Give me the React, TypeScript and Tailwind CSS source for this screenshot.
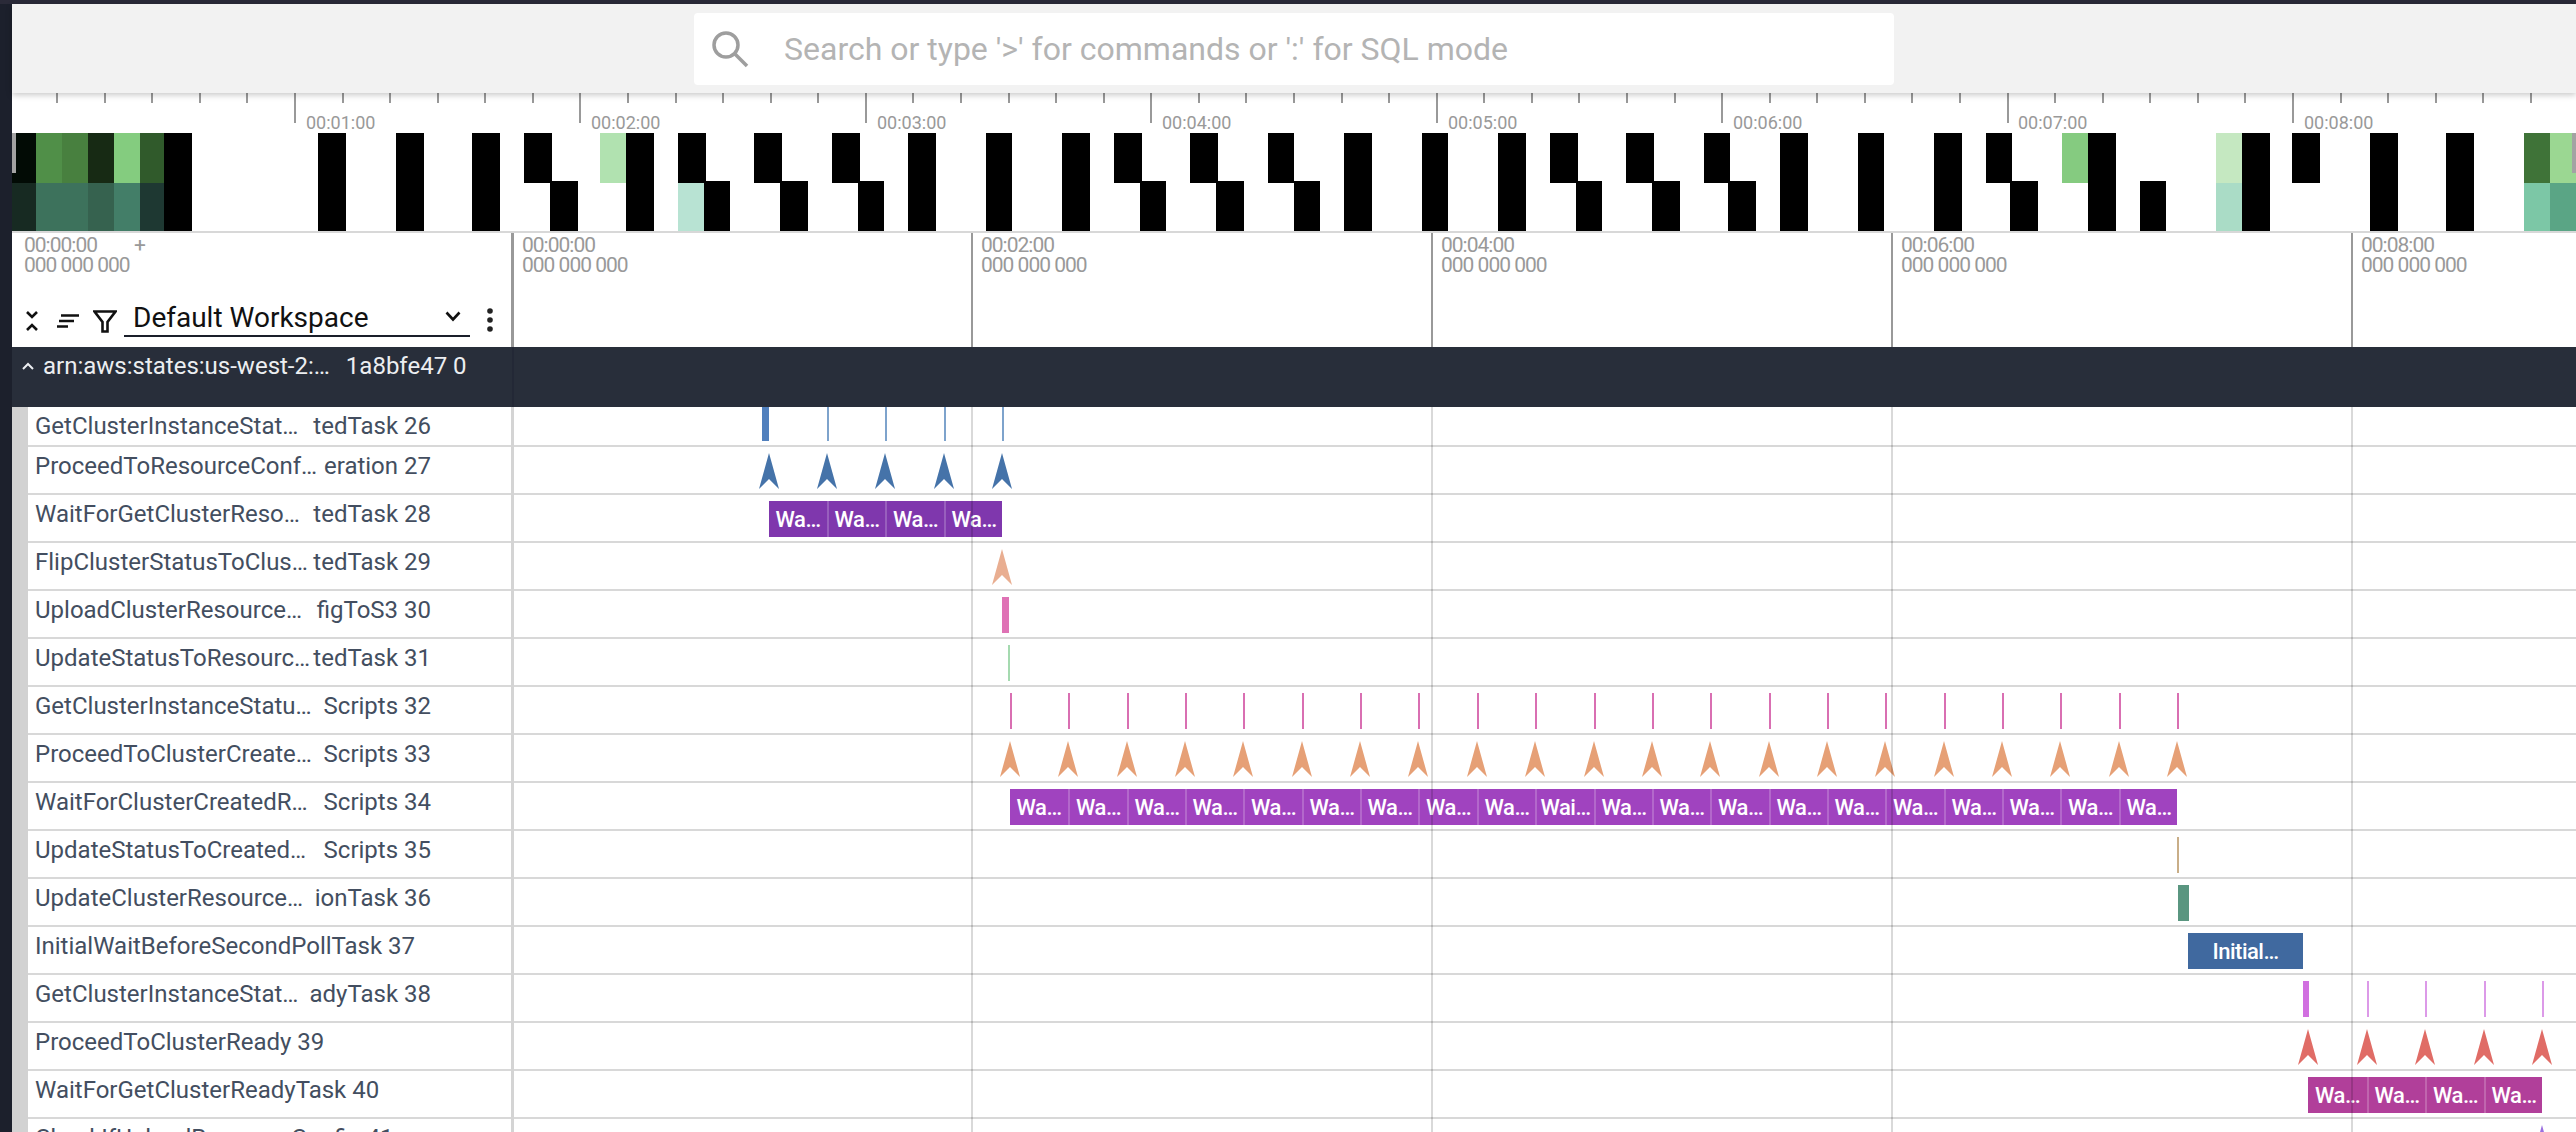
import React from "react";

// page x of the left edge of the track area
const TRACK_X = 514;

type Item =
  | { kind: "slice"; x: number; w: number; bg: string; label?: string; divider?: boolean }
  | { kind: "arrow"; x: number; color: string };

interface Row {
  name: string;
  tail?: string;
  items: Item[];
}

const arrows = (xs: number[], color: string): Item[] =>
  xs.map((x) => ({ kind: "arrow", x, color }));

const ticks = (xs: number[], bg: string, w = 2): Item[] =>
  xs.map((x) => ({ kind: "slice", x, w, bg }));

const waits = (xs: number[], bg: string, longAt = -1): Item[] =>
  xs.slice(0, -1).map((x, i) => ({
    kind: "slice",
    x,
    w: xs[i + 1] - x,
    bg,
    label: i === longAt ? "Wai…" : "Wa…",
    divider: i > 0,
  }));

const blueXs = [769, 827, 885, 944, 1002];
const pinkXs = Array.from({ length: 21 }, (_, i) => Math.round(1010 + i * 58.35));
const magentaXs = [2308, 2367, 2425, 2484, 2542];

const rows: Row[] = [
  {
    name: "GetClusterInstanceStat…",
    tail: "tedTask 26",
    items: [
      { kind: "slice", x: 762, w: 7, bg: "bg-[#5180bd]" },
      ...ticks([827, 885, 944, 1002], "bg-[#7ea3cc]"),
    ],
  },
  { name: "ProceedToResourceConf…", tail: "eration 27", items: arrows(blueXs, "text-[#4573a9]") },
  { name: "WaitForGetClusterReso…", tail: "tedTask 28", items: waits(blueXs, "bg-[#7f37ad]") },
  { name: "FlipClusterStatusToClus…", tail: "tedTask 29", items: arrows([1002], "text-[#e9ae91]") },
  {
    name: "UploadClusterResource…",
    tail: "figToS3 30",
    items: [{ kind: "slice", x: 1002, w: 7, bg: "bg-[#df72b5]" }],
  },
  { name: "UpdateStatusToResourc…", tail: "tedTask 31", items: ticks([1008], "bg-[#a5dab0]") },
  { name: "GetClusterInstanceStatu…", tail: "Scripts 32", items: ticks(pinkXs, "bg-[#d96fb2]") },
  { name: "ProceedToClusterCreate…", tail: "Scripts 33", items: arrows(pinkXs, "text-[#e6a076]") },
  { name: "WaitForClusterCreatedR…", tail: "Scripts 34", items: waits(pinkXs, "bg-[#a043bf]", 9) },
  { name: "UpdateStatusToCreated…", tail: "Scripts 35", items: ticks([2177], "bg-[#c9ae88]") },
  {
    name: "UpdateClusterResource…",
    tail: "ionTask 36",
    items: [{ kind: "slice", x: 2178, w: 11, bg: "bg-[#5a9680]" }],
  },
  {
    name: "InitialWaitBeforeSecondPollTask 37",
    items: [{ kind: "slice", x: 2188, w: 115, bg: "bg-[#40699f]", label: "Initial…" }],
  },
  {
    name: "GetClusterInstanceStat…",
    tail: "adyTask 38",
    items: [
      { kind: "slice", x: 2303, w: 6, bg: "bg-[#d170e0]" },
      ...ticks([2367, 2425, 2484, 2542], "bg-[#dc9ae8]"),
    ],
  },
  { name: "ProceedToClusterReady 39", items: arrows(magentaXs, "text-[#e06c66]") },
  { name: "WaitForGetClusterReadyTask 40", items: waits(magentaXs, "bg-[#b13f9a]") },
  { name: "CheckIfUploadResourceConfig 41", items: arrows([2542], "text-[#9a6fe0]") },
];

// overview minimap cells, page x
const BLACK = "#000000";
const topCells: [number, number, string][] = [
  [12, 36, "#020b05"], [36, 62, "#508f48"], [62, 88, "#48803f"], [88, 114, "#172a14"],
  [114, 140, "#84cc7f"], [140, 164, "#305a2b"], [164, 192, BLACK], [318, 346, BLACK],
  [396, 424, BLACK], [472, 500, BLACK], [524, 552, BLACK], [600, 626, "#b1e2b0"],
  [626, 654, BLACK], [678, 706, BLACK], [754, 782, BLACK], [832, 860, BLACK],
  [908, 936, BLACK], [986, 1012, BLACK], [1062, 1090, BLACK], [1114, 1142, BLACK],
  [1190, 1218, BLACK], [1268, 1294, BLACK], [1344, 1372, BLACK], [1422, 1448, BLACK],
  [1498, 1526, BLACK], [1550, 1578, BLACK], [1626, 1654, BLACK], [1704, 1730, BLACK],
  [1780, 1808, BLACK], [1858, 1884, BLACK], [1934, 1962, BLACK], [1986, 2012, BLACK],
  [2062, 2088, "#85cb80"], [2088, 2116, BLACK], [2216, 2242, "#c5e8c1"], [2242, 2270, BLACK],
  [2292, 2320, BLACK], [2370, 2398, BLACK], [2446, 2474, BLACK], [2524, 2550, "#3f7338"],
  [2550, 2576, "#9bd792"],
];
const bottomCells: [number, number, string][] = [
  [12, 36, "#172a22"], [36, 88, "#3d725c"], [88, 114, "#36624f"], [114, 140, "#437e68"],
  [140, 164, "#1e3832"], [164, 192, BLACK], [318, 346, BLACK], [396, 424, BLACK],
  [472, 500, BLACK], [550, 578, BLACK], [626, 654, BLACK], [678, 704, "#b8e3d3"],
  [704, 730, BLACK], [780, 808, BLACK], [858, 884, BLACK], [908, 936, BLACK],
  [986, 1012, BLACK], [1062, 1090, BLACK], [1140, 1166, BLACK], [1216, 1244, BLACK],
  [1294, 1320, BLACK], [1344, 1372, BLACK], [1422, 1448, BLACK], [1498, 1526, BLACK],
  [1576, 1602, BLACK], [1652, 1680, BLACK], [1728, 1756, BLACK], [1780, 1808, BLACK],
  [1858, 1884, BLACK], [1934, 1962, BLACK], [2010, 2038, BLACK], [2088, 2116, BLACK],
  [2140, 2166, BLACK], [2216, 2242, "#aadcc6"], [2242, 2270, BLACK], [2370, 2398, BLACK],
  [2446, 2474, BLACK], [2524, 2550, "#7cc7a6"], [2550, 2576, "#5aa585"],
];

const rulerTicks = Array.from({ length: 53 }, (_, i) => i - 5);
const minuteLabels = [1, 2, 3, 4, 5, 6, 7, 8];
const headerLabels = ["00:02:00", "00:04:00", "00:06:00", "00:08:00"];

const Overview: React.FC = () => (
  <div className="relative h-[140px] shrink-0 border-b-2 border-[#d8d8d8] bg-white">
    <svg className="absolute left-0 top-0" width="2564" height="138">
      <g transform="translate(-12 -93)">
        {rulerTicks.map((k) => (
          <rect
            key={k}
            x={Math.round(295 + k * 47.57) - 1}
            y={93}
            width={2}
            height={k % 6 === 0 ? 30 : 10}
            fill="#999999"
          />
        ))}
        {bottomCells.map(([a, b, c]) => (
          <rect key={a} x={a} y={181} width={b - a} height={50} fill={c} />
        ))}
        {topCells.map(([a, b, c]) => (
          <rect key={a} x={a} y={133} width={b - a} height={50} fill={c} />
        ))}
        <rect x={12} y={133} width={4} height={40} fill="#a3a3a3" />
        <rect x={2572} y={133} width={4} height={40} fill="#a3a3a3" />
      </g>
    </svg>
    {minuteLabels.map((m) => (
      <span
        key={m}
        className="absolute top-[19px] text-[18px] leading-[21px] text-[#999999]"
        style={{ left: Math.round(295 + (m - 1) * 285.4) + 11 - 12 }}
      >
        {`00:0${m}:00`}
      </span>
    ))}
  </div>
);

const TimeHeader: React.FC = () => (
  <div className="flex h-[114px] shrink-0 bg-white">
    <div className="flex w-[502px] shrink-0 flex-col justify-between border-r-[3px] border-[#999999]">
      <div className="flex pl-3 pt-[2px] text-[21px] leading-5 tracking-[-1px] text-[#999999]">
        <div className="w-[110px]">
          <div>00:00:00</div>
          <div>000 000 000</div>
        </div>
        <span>+</span>
      </div>
      <div className="relative flex h-[48px] items-start pt-[1px]">
        <svg className="absolute left-[13px] top-[11px]" width="14" height="22" viewBox="0 0 14 22">
          <path d="M2 2l5 5 5-5M2 20l5-5 5 5" fill="none" stroke="#111" strokeWidth="2.6" />
        </svg>
        <svg className="absolute left-[44px] top-[15px]" width="24" height="14" viewBox="0 0 24 14">
          <path d="M5 1.5h18M3 7h15M1 12.5h11" fill="none" stroke="#111" strokeWidth="2.4" />
        </svg>
        <svg className="absolute left-[81px] top-[11px]" width="24" height="23" viewBox="0 0 24 23">
          <path d="M1.5 1.5h21L14.5 12v9.5h-5V12z" fill="none" stroke="#111" strokeWidth="2.6" />
        </svg>
        <div className="absolute left-[112px] top-[-2px] flex h-[40px] w-[346px] items-center justify-between border-b-2 border-[#1a1f2a] pl-[9px] pr-[9px] text-[28px] text-[#111111]">
          <span className="relative top-[2px] leading-[36px]">Default Workspace</span>
          <svg width="16" height="11" viewBox="0 0 16 11">
            <path d="M1.5 1.5L8 8.5l6.5-7" fill="none" stroke="#111" strokeWidth="2.6" />
          </svg>
        </div>
        <svg className="absolute left-[475px] top-[9px]" width="6" height="24" viewBox="0 0 6 24">
          <circle cx="3" cy="3" r="2.8" fill="#222" />
          <circle cx="3" cy="12" r="2.8" fill="#222" />
          <circle cx="3" cy="21" r="2.8" fill="#222" />
        </svg>
      </div>
    </div>
    <div className="relative flex-1">
      {["00:00:00", ...headerLabels].map((label, i) => (
        <div
          key={label}
          className="absolute top-0 h-full"
          style={{ left: i * 460 - (i === 0 ? 2 : 3) }}
        >
          {i > 0 && <div className="h-full w-[2px] bg-[#999999]" />}
          <div className="absolute left-[10px] top-[2px] whitespace-nowrap text-[21px] leading-5 tracking-[-1px] text-[#999999]">
            <div>{label}</div>
            <div>000 000 000</div>
          </div>
        </div>
      ))}
    </div>
  </div>
);

const GroupBar: React.FC = () => (
  <div className="flex h-[60px] shrink-0 bg-[#282e3a] text-[24px] text-[#eceef1]">
    <div className="flex h-full w-[502px] shrink-0 items-start border-r-2 border-[#232836] pl-[10px] pt-[4px] leading-[30px]">
      <svg className="mr-[9px] mt-[11px] shrink-0" width="12" height="8" viewBox="0 0 12 8">
        <path d="M1 7l5-5 5 5" fill="none" stroke="#eceef1" strokeWidth="2" />
      </svg>
      <span className="whitespace-nowrap">arn:aws:states:us-west-2:…</span>
      <span className="ml-4 whitespace-nowrap">1a8bfe47 0</span>
    </div>
  </div>
);

const Arrow: React.FC<{ x: number; color: string; top: number }> = ({ x, color, top }) => (
  <svg
    className={`absolute ${color}`}
    style={{ left: x - TRACK_X - 10, top }}
    width="20"
    height="36"
    viewBox="0 0 20 36"
  >
    <polygon points="10,0 20,36 10,26 0,36" fill="currentColor" />
  </svg>
);

const TrackRow: React.FC<{ row: Row; index: number }> = ({ row, index }) => {
  const first = index === 0;
  const top = first ? 0 : 6;
  const height = first ? 34 : 36;
  return (
    <div
      className={`flex shrink-0 border-b-2 border-[#d8d8d8] ${first ? "h-[40px]" : "h-[48px]"}`}
    >
      <div className="flex w-[502px] shrink-0 -mb-[2px] border-r-[3px] border-[#d4d4d4]">
        <div className="w-4 shrink-0 bg-[#d2d2d2]" />
        <div className="ml-[7px] flex w-[396px] justify-between whitespace-nowrap text-[24px] leading-[38px] text-[#434e60]">
          <span>{row.name}</span>
          {row.tail && <span>{row.tail}</span>}
        </div>
      </div>
      <div className="relative flex-1">
        {row.items.map((item, i) =>
          item.kind === "arrow" ? (
            <Arrow key={i} x={item.x} color={item.color} top={top} />
          ) : (
            <div
              key={i}
              className={`absolute flex items-center justify-center overflow-hidden text-[22px] font-medium tracking-[-0.5px] text-white ${item.bg} ${item.divider ? "border-l-2 border-white/20" : ""}`}
              style={{ left: item.x - TRACK_X, top, width: item.w, height }}
            >
              {item.label}
            </div>
          ),
        )}
      </div>
    </div>
  );
};

const App: React.FC = () => (
  <div className="flex h-[1132px] w-[2576px] flex-col overflow-hidden bg-white font-['Roboto',sans-serif]">
    <div className="h-1 shrink-0 bg-[#2a2a38]" />
    <div className="flex min-h-0 flex-1">
      <div className="w-3 shrink-0 bg-[#1c202c]" />
      <div className="flex min-w-0 flex-1 flex-col">
        <div className="relative z-10 flex h-[89px] shrink-0 items-center bg-[#f2f2f2] pl-[682px] shadow-[0_2px_6px_rgba(0,0,0,0.22)]">
          <div className="flex h-[72px] w-[1200px] items-center rounded bg-white pl-[17px]">
            <svg width="38" height="38" viewBox="0 0 38 38">
              <circle cx="15" cy="15" r="12" fill="none" stroke="#9e9e9e" strokeWidth="3.5" />
              <path d="M24 24l12 12" stroke="#9e9e9e" strokeWidth="3.5" />
            </svg>
            <span className="ml-[35px] whitespace-nowrap text-[32px] text-[#b4b4b4]">
              Search or type '&gt;' for commands or ':' for SQL mode
            </span>
          </div>
        </div>
        <Overview />
        <TimeHeader />
        <GroupBar />
        <div className="relative flex min-h-0 flex-1 flex-col overflow-hidden">
          {rows.map((row, i) => (
            <TrackRow key={i} row={row} index={i} />
          ))}
          {[971, 1431, 1891, 2351].map((x) => (
            <div
              key={x}
              className="absolute bottom-0 top-0 w-[2px] bg-black/15"
              style={{ left: x - 12 }}
            />
          ))}
        </div>
      </div>
    </div>
  </div>
);

export default App;
